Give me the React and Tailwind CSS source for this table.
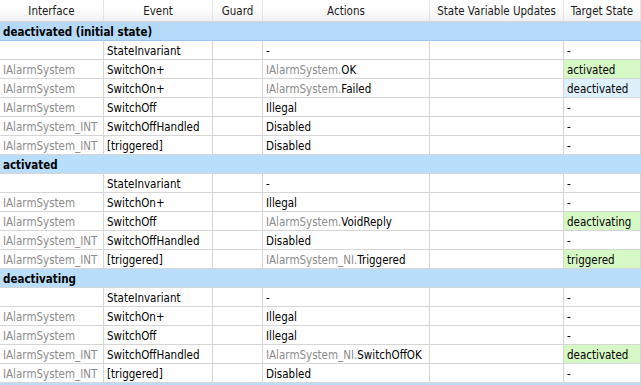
import React from 'react';

const cols = ['w-[104px]', 'w-[109px]', 'w-[50px]', 'w-[167px]', 'w-[134px]', 'w-[77px]'];
const headers = ['Interface', 'Event', 'Guard', 'Actions', 'State Variable Updates', 'Target State'];

const sections = [
  {
    name: 'deactivated (initial state)',
    first: true,
    rows: [
      ['', 'StateInvariant', '', '-', '', '-'],
      ['IAlarmSystem', 'SwitchOn+', '', 'IAlarmSystem.OK', '', 'activated', 'green'],
      ['IAlarmSystem', 'SwitchOn+', '', 'IAlarmSystem.Failed', '', 'deactivated', 'blue'],
      ['IAlarmSystem', 'SwitchOff', '', 'Illegal', '', '-'],
      ['IAlarmSystem_INT', 'SwitchOffHandled', '', 'Disabled', '', '-'],
      ['IAlarmSystem_INT', '[triggered]', '', 'Disabled', '', '-'],
    ],
  },
  {
    name: 'activated',
    rows: [
      ['', 'StateInvariant', '', '-', '', '-'],
      ['IAlarmSystem', 'SwitchOn+', '', 'Illegal', '', '-'],
      ['IAlarmSystem', 'SwitchOff', '', 'IAlarmSystem.VoidReply', '', 'deactivating', 'green'],
      ['IAlarmSystem_INT', 'SwitchOffHandled', '', 'Disabled', '', '-'],
      ['IAlarmSystem_INT', '[triggered]', '', 'IAlarmSystem_NI.Triggered', '', 'triggered', 'green'],
    ],
  },
  {
    name: 'deactivating',
    rows: [
      ['', 'StateInvariant', '', '-', '', '-'],
      ['IAlarmSystem', 'SwitchOn+', '', 'Illegal', '', '-'],
      ['IAlarmSystem', 'SwitchOff', '', 'Illegal', '', '-'],
      ['IAlarmSystem_INT', 'SwitchOffHandled', '', 'IAlarmSystem_NI.SwitchOffOK', '', 'deactivated', 'green'],
      ['IAlarmSystem_INT', '[triggered]', '', 'Disabled', '', '-'],
    ],
  },
];

const Action = ({ text }) => {
  const dot = text.indexOf('.');
  if (dot < 0) return <span>{text}</span>;
  return (
    <span>
      <span className="text-[#8c8c8c]">{text.slice(0, dot + 1)}</span>
      {text.slice(dot + 1)}
    </span>
  );
};

const Row = ({ row }) => {
  const fill = row[6] === 'green' ? 'bg-[#d6f8c4]' : row[6] === 'blue' ? 'bg-[#ddf0fc]' : 'bg-white';
  return (
    <div className="flex h-[19px] shrink-0">
      {row.slice(0, 6).map((cell, i) => (
        <div
          key={i}
          className={`${cols[i]} shrink-0 h-full flex items-center pl-[3px] pt-[3px] border-r border-b border-[#d6d6d6] whitespace-nowrap overflow-hidden ${
            i === 5 ? fill : 'bg-white'
          } ${i === 0 ? 'text-[#8c8c8c]' : 'text-black'}`}
        >
          {i === 3 ? <Action text={cell} /> : cell}
        </div>
      ))}
    </div>
  );
};

export default function App() {
  return (
    <div
      className="w-[641px] h-screen overflow-hidden bg-white flex flex-col text-[11.5px] leading-none"
      style={{ fontFamily: '"DejaVu Sans Condensed", "DejaVu Sans", sans-serif' }}
    >
      <div className="flex h-[22px] shrink-0 border-b border-[#d6d6d6] bg-linear-to-b from-white from-40% to-[#f1f1f1]">
        {headers.map((h, i) => (
          <div
            key={h}
            className={`${cols[i]} shrink-0 h-full flex items-center justify-center pt-[3px] border-r border-[#e4e4e4] text-[#1a1a1a] whitespace-nowrap`}
          >
            {h}
          </div>
        ))}
      </div>
      {sections.map((s) => (
        <React.Fragment key={s.name}>
          <div
            className={`h-[19px] shrink-0 flex items-center pl-[3px] pt-[3px] font-bold text-black border-b ${
              s.first ? 'bg-[#b4d9f9] border-[#9dc5e9]' : 'bg-[#b9defb] border-[#d6d6d6]'
            }`}
          >
            {s.name}
          </div>
          {s.rows.map((r, i) => (
            <Row key={i} row={r} />
          ))}
        </React.Fragment>
      ))}
      <div className="h-[19px] shrink-0 bg-[#b9defb]" />
    </div>
  );
}
